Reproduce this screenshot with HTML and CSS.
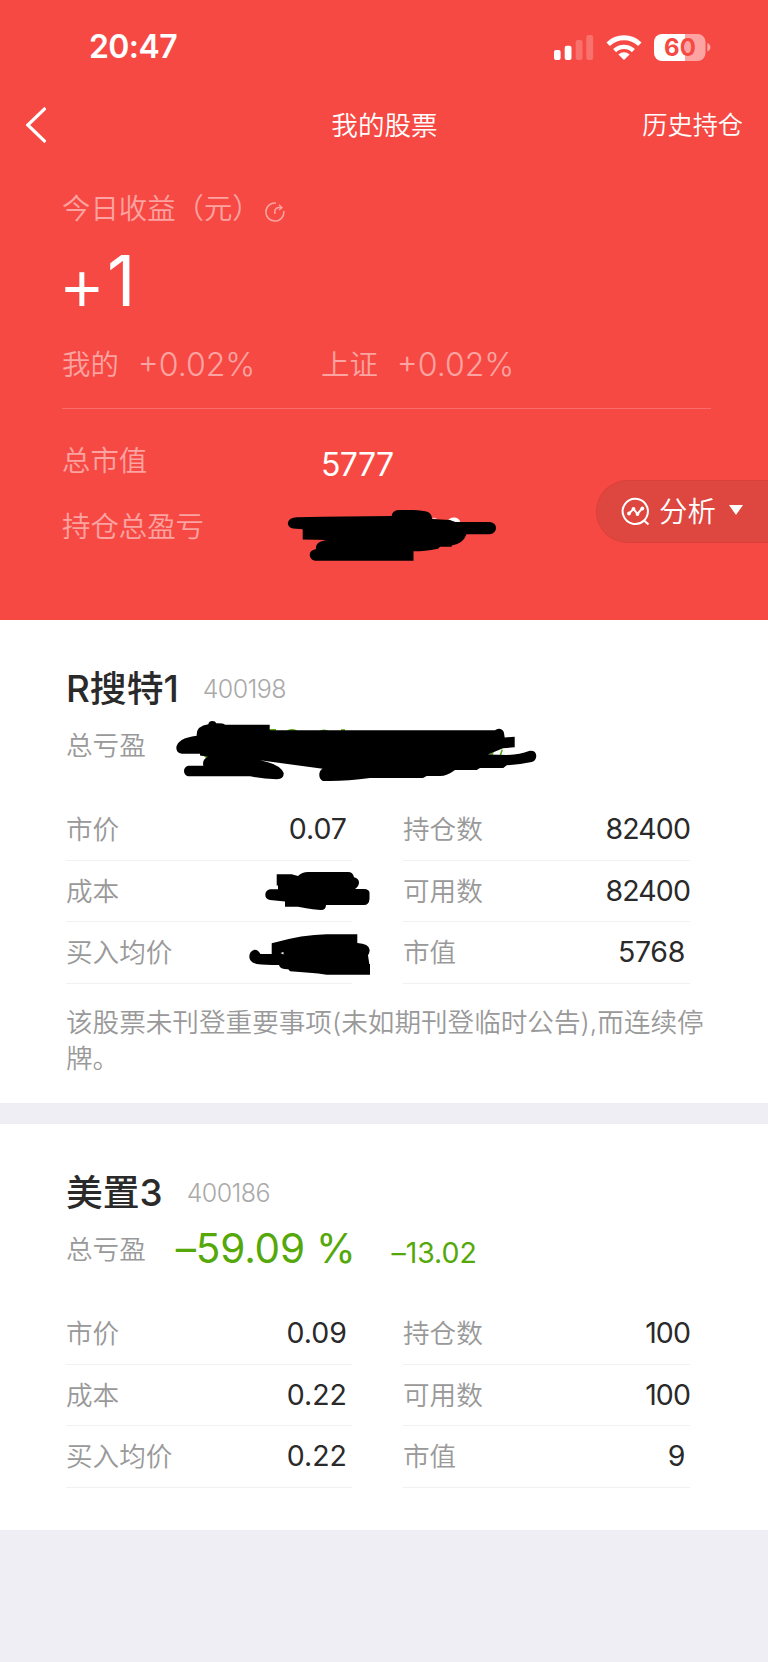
FILE: index.html
```html
<!DOCTYPE html>
<html lang="zh-CN">
<head>
    <meta charset="UTF-8">
    <meta name="viewport" content="width=device-width, initial-scale=1.0">
    <title>我的股票</title>
    <link rel="stylesheet" href="styles.css">
</head>
<body>
    <div class="header">
        <div class="status-bar">
            <div class="time">20:47</div>
            <svg class="status-icons" width="158" height="30" viewBox="552 30 158 30">
                <g fill="#fff">
                    <rect x="553" y="48" width="6.6" height="10" rx="2"/>
                    <rect x="563.7" y="43.7" width="6.8" height="14.3" rx="2"/>
                    <rect x="574.7" y="38" width="6.8" height="20" rx="2" opacity=".22"/>
                    <rect x="585.3" y="33" width="6.8" height="25" rx="2" opacity=".22"/>
                </g>
                <g fill="none" stroke="#fff" stroke-width="5">
                    <path d="M607.2 42.2a22.7 22.7 0 0 1 31.6 0"/>
                    <path d="M613.6 48.6a13.6 13.6 0 0 1 18.8 0" stroke-width="4.4"/>
                </g>
                <path d="M617.4 52.6a8 8 0 0 1 11.2 0L623 58z" fill="#fff"/>
                <path d="M661 32h23v27h-23a8 8 0 0 1-8-8V40a8 8 0 0 1 8-8z" fill="#fff"/>
                <path d="M684 32h12.500a8 8 0 0 1 8 8v11a8 8 0 0 1-8 8H684zM706.300 41c4.200 1.600 4.200 7 0 8.600z" fill="#fff" opacity=".5"/>
                <text class="battery-text" x="679" y="53.600" text-anchor="middle">60</text>
            </svg>
        </div>
        <div class="nav">
            <svg class="back" width="20" height="36" viewBox="0 0 20 36">
                <path d="M19.500 1L1.800 18l17.700 17" fill="none" stroke="#fff" stroke-width="3.200"/>
            </svg>
            <div class="nav-title">我的股票</div>
            <div class="nav-link">历史持仓</div>
        </div>

        <div class="summary">
            <div class="today-label">
                <span>今日收益（元）</span>
                <svg class="refresh" width="20" height="20" viewBox="0 0 20 20" fill="none" stroke="#fff" stroke-width="1.5">
                    <path d="M11 1.1A9 9 0 1 0 18.8 9"/>
                    <path d="M9.8 12V9.6c0-2.600 1.800-4 4.600-4h2"/>
                    <path d="M14 2.700L17 5.600L14 8" stroke-width="1.300"/>
                </svg>
            </div>
            <div class="today-value"><span class="plus">+</span><span>1</span></div>
            <div class="stats">
                <div class="stat"><span>我的</span><span class="stat-value">+0.02%</span></div>
                <div class="stat"><span>上证</span><span class="stat-value">+0.02%</span></div>
            </div>
            <div class="total-row">
                <span>总市值</span>
                <span class="total-value">5777</span>
            </div>
            <div class="total-row profit-row">
                <span>持仓总盈亏</span>
            </div>
            <svg class="mask mask-profit" width="210" height="52" viewBox="287 509 210 52">
                <path d="M432 518.500q2-1.500 5 .5zM448 521q1-3.500 6-3.500t6.500 5z" fill="#fff"/>
                <path d="M297 517.300L323 516.700L391.700 516Q392 511 398 510H413Q423 510.300 428 512Q432 514 432 519L450 520L455 522H490Q496 523 496 528T490 534.300H466.500Q463 544 451.700 545.500V546.700H440L438 548.700Q423 551.500 413.500 551.300V560.700H315Q310 559.500 309.700 555T316 549Q315 541 328 540L302.700 539.500V529.300L293 528.500Q288 527.500 287.800 523Q289 517.500 297 517.300z"/>
            </svg>
        </div>

        <div class="analyse">
            <svg width="30" height="30" viewBox="0 0 30 30" fill="none" stroke="#fff" stroke-width="2">
                <path d="M23 24.500A12.600 12.600 0 1 1 25.800 20.500Q24.800 23 23 24.500L27.500 28.500"/>
                <path d="M8 17.500L12.500 13L16.500 18L21 12.500"/>
                <g fill="#fff" stroke="none">
                    <circle cx="8" cy="17.500" r="1.900"/><circle cx="12.500" cy="12.800" r="1.900"/>
                    <circle cx="16.500" cy="18" r="1.900"/><circle cx="21.300" cy="12.500" r="1.900"/>
                </g>
            </svg>
            <span>分析</span>
            <i class="caret"></i>
        </div>
    </div>

    <div class="card">
        <div class="card-head">
            <span class="name">R搜特1</span>
            <span class="code">400198</span>
        </div>
        <div class="card-total"><span class="label">总亏盈</span></div>
        <div class="table">
            <div class="row"><span class="label">市价</span><span class="value">0.07</span></div>
            <div class="row"><span class="label">持仓数</span><span class="value">82400</span></div>
            <div class="row"><span class="label">成本</span></div>
            <div class="row"><span class="label">可用数</span><span class="value">82400</span></div>
            <div class="row"><span class="label">买入均价</span></div>
            <div class="row"><span class="label">市值</span><span class="value short">5768</span></div>
        </div>
        <div class="note">该股票未刊登重要事项(未如期刊登临时公告),而连续停牌。</div>

        <svg class="mask mask-card" width="362" height="256" viewBox="176 720 362 256">
            <g fill="#55a80a">
                <path d="M269 729h7v3h-7zM286 731q6-4 12 0zM319 731q5-3 10 0zM341 729.300h4v2h-4zM203 755h7l-3 4z"/>
                <path d="M488 754.500l6-2.500-1.500 3zM501.500 749.500l1.500.3-2 6h-1.600z"/>
            </g>
            <path d="M176.300 748Q177 738 196.700 735.700Q196 726 208.300 724.300Q209 721 212.300 721T216 723.300Q223 723 225 724.700H269.700V730.300H495Q497 728.500 499.300 728.700Q503.500 729.500 504 733L504.700 737.500L514.700 736.700V747.300L503 748.300L488 754.500L506.700 755Q520 754.500 529 751Q536 750 536.300 756Q536 761 531.700 762Q520 764.500 506.700 765.300L503.300 768H480L476.700 770H455Q447 776 440 776H426.700L423 778H370Q345 781.500 323 780.900Q319 779 319.300 774Q320 769.500 322.700 768.700L260 760.300Q280 764 283.700 773Q284 779 277 779.300Q262 779 250 776.300H188Q184 775 184 771T188.300 765.700H203.300Q202 759 208 756.700L200 755.500V753.700H181.700Q176.500 753 176.300 748z"/>
            <path d="M276.700 874.300H291.700L298 876Q302 872 308 872H348Q353 872 354 877.300Q359 878.500 359 882.500Q359 886 355 889H364Q369.500 889.300 369.500 893V899Q369 905 364 905H326Q326 910 321 910Q316 910 298 906.700H285V901.500L270 900Q265.300 899 265.300 894.700T270 889.300H278V885.500H276.700z"/>
            <path d="M271.700 943.300Q303 934.500 326.700 934.300H357.300V943Q369 943.500 369.700 950Q369.500 953 368 955.300L369.300 964H370V974.700H326.700Q310 972.500 290 971.300L288.300 969.300Q280 969.500 279 965Q265 965 256.700 964Q249.300 962 249.300 956.700T254.500 949.700Q258 949.500 260.500 954H271.700z"/>
            <path d="M280.500 953l3-1v2.500z" fill="#fff"/>
        </svg>
    </div>

    <div class="card card-second">
        <div class="card-head">
            <span class="name">美置3</span>
            <span class="code">400186</span>
        </div>
        <div class="card-total">
            <span class="label">总亏盈</span>
            <span class="percent">–59.09 %</span>
            <span class="amount">–13.02</span>
        </div>
        <div class="table">
            <div class="row"><span class="label">市价</span><span class="value">0.09</span></div>
            <div class="row"><span class="label">持仓数</span><span class="value">100</span></div>
            <div class="row"><span class="label">成本</span><span class="value">0.22</span></div>
            <div class="row"><span class="label">可用数</span><span class="value">100</span></div>
            <div class="row"><span class="label">买入均价</span><span class="value">0.22</span></div>
            <div class="row"><span class="label">市值</span><span class="value short">9</span></div>
        </div>
    </div>
</body>
</html>
```

FILE: styles.css
```css
* {
    box-sizing: border-box;
}

body {
    margin: 0;
    min-height: 1662px;
    background: #eeeef4;
    font-family: Inter, "Noto Sans CJK SC", sans-serif;
    font-weight: 350;
    line-height: 1;
    color: #2a2a2a;
    white-space: nowrap;
}

.header {
    position: relative;
    height: 620px;
    background: #f74944;
    color: #fff;
}

.status-bar {
    display: flex;
    justify-content: space-between;
    align-items: center;
    height: 93px;
    padding: 0 57px 0 89px;
}

.time {
    font-size: 32px;
    font-weight: 600;
    letter-spacing: -0.6px;
}

.battery-text {
    font-size: 24px;
    font-weight: 700;
    fill: #f74944;
}

.nav {
    display: grid;
    grid-template-columns: 1fr auto 1fr;
    align-items: center;
    height: 64px;
    padding: 0 25px 0 26px;
}

.nav-title {
    font-size: 26.6px;
}

.nav-link {
    padding-top: 1px;
    font-size: 25.2px;
    text-align: right;
}

.summary {
    padding: 33px 57px 0 62px;
    font-size: 28.4px;
    color: rgba(255, 255, 255, 0.5);
}

.today-label {
    display: flex;
    align-items: center;
    height: 38px;
    padding-top: 1px;
}

.refresh {
    margin: 4px 0 0 4px;
    opacity: 0.5;
}

.today-value {
    display: flex;
    height: 71px;
    margin-top: 17px;
    font-size: 70px;
    font-weight: 400;
    line-height: 71px;
    color: #fff;
}

.plus {
    width: 45px;
    padding-top: 8px;
    font-family: "Liberation Sans", sans-serif;
    font-size: 68px;
}

.stats {
    display: flex;
    height: 64px;
    margin-top: 29px;
    line-height: 40px;
    border-bottom: 1px solid rgba(255, 255, 255, 0.2);
}

.stat {
    display: flex;
    width: 259px;
    gap: 19px;
}

.stat-value {
    font-size: 32px;
}

.total-row {
    display: flex;
    height: 40px;
    margin-top: 32px;
    line-height: 40px;
}

.total-row > span:first-child {
    width: 259px;
}

.total-value {
    padding-top: 4px;
    font-size: 32px;
    font-weight: 400;
    letter-spacing: -0.6px;
    color: #fff;
}

.profit-row {
    margin-top: 26px;
}

.mask {
    position: absolute;
}

.mask-profit {
    left: 287px;
    top: 509px;
}

.analyse {
    position: absolute;
    right: 0;
    top: 480px;
    display: flex;
    align-items: center;
    width: 172px;
    height: 63px;
    padding-left: 24px;
    border: 1px solid #d9403c;
    border-right: 0;
    border-radius: 32px 0 0 32px;
    background: #de473f;
    font-size: 28.4px;
}

.analyse svg {
    margin-top: -2px;
}

.analyse span {
    margin-left: 8px;
    padding-top: 1px;
}

.caret {
    margin: -3px 0 0 13px;
    border: 7px solid transparent;
    border-top: 10px solid #fff;
    border-bottom: 0;
}

.card {
    position: relative;
    height: 483px;
    padding: 44px 78px 0 66px;
    background: #fff;
}

.card-second {
    height: 406px;
    margin-top: 21px;
}

.card-head {
    display: flex;
    height: 48px;
    line-height: 50px;
}

.name {
    font-size: 36.8px;
    font-weight: 500;
}

.code {
    margin-left: 24px;
    font-size: 25px;
    font-weight: 300;
    letter-spacing: -0.6px;
    color: #aaa;
}

.card-total {
    display: flex;
    height: 40px;
    margin-top: 13px;
    line-height: 40px;
    color: #55a80a;
}

.label {
    font-size: 26.6px;
    color: #999;
}

.percent {
    margin-left: 30px;
    font-size: 40.5px;
    font-weight: 400;
    letter-spacing: -0.2px;
}

.amount {
    margin-left: 36px;
    padding-top: 4px;
    font-size: 28.5px;
    font-weight: 400;
    letter-spacing: -0.1px;
}

.table {
    display: grid;
    grid-template-columns: 286px 287px;
    justify-content: space-between;
    margin-top: 34px;
}

.row {
    display: flex;
    justify-content: space-between;
    height: 61.5px;
    padding-right: 5px;
    line-height: 60px;
    border-bottom: 1px solid #f1f1f1;
}

.row:nth-child(even) {
    padding-right: 0;
}

.value {
    font-size: 28.5px;
    font-weight: 400;
}

.row:nth-child(even) .value {
    letter-spacing: -0.9px;
}

.row:nth-child(even) .short {
    padding-right: 5px;
    letter-spacing: -0.3px;
}

.note {
    width: 640px;
    margin-top: 20px;
    font-size: 26.6px;
    line-height: 36px;
    color: #999;
    white-space: normal;
}

.mask-card {
    left: 176px;
    top: 100px;
}
```
